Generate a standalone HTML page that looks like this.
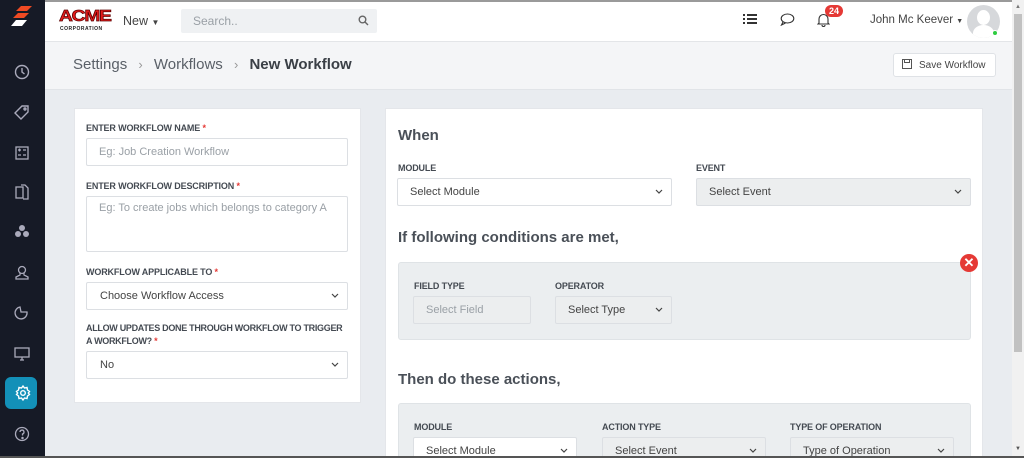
<!DOCTYPE html>
<html><head><meta charset="utf-8"><style>
*{box-sizing:border-box;margin:0;padding:0}
html,body{width:1024px;height:458px;overflow:hidden}
body{background:#e9ecf0;font-family:"Liberation Sans",sans-serif;position:relative;color:#3a3f46}
.sb{position:absolute;left:0;top:0;width:45px;height:458px;background:#161a26}
.ic{position:absolute;left:12px;width:20px;height:20px}
.hdr{position:absolute;left:45px;top:0;width:967px;height:42px;background:#fff;border-top:2px solid #9a9a9a;border-bottom:1px solid #e3e5e8}
.bc{position:absolute;left:45px;top:42px;width:967px;height:48px;background:#f4f5f7;border-bottom:1px solid #e1e4e8}
.card{position:absolute;background:#fff;border:1px solid #e4e6ea}
.lbl{position:absolute;font-size:9px;font-weight:bold;color:#444a52;letter-spacing:-.15px;white-space:nowrap}
.lbl b{color:#e53935}
.in{position:absolute;border:1px solid #dcdfe3;border-radius:2px;background:#fff;font-size:11px;color:#9aa0a6;padding-left:12px;display:flex;align-items:center}
.in.dk{color:#444}
.in.g{background:#eceeef}
.in svg{position:absolute;right:8px;top:50%;margin-top:-3px}
h3{position:absolute;font-size:15px;font-weight:bold;color:#4a5058}
.gb{position:absolute;background:#ebeef0;border:1px solid #dfe3e6;border-radius:3px}
.sc{position:absolute;left:1012px;top:0;width:12px;height:458px;background:#f1f1f1}
</style></head><body>
<div class="sb">
 <svg style="position:absolute;left:9px;top:6px" width="26" height="24" viewBox="0 0 26 24"><polygon points="12,0 23,0 18,5 7,5" fill="#f04a23"/><polygon points="9,7 20,7 15,12 4,12" fill="#f04a23"/><polygon points="7,14 18,14 13,20 2,20" fill="#fff"/></svg>
 <svg class="ic" style="top:62px" viewBox="0 0 20 20" fill="none" stroke="#aab" stroke-width="1.4"><circle cx="10" cy="10" r="6.5"/><path d="M10 6v4l2.5 2"/></svg>
 <svg class="ic" style="top:102px" viewBox="0 0 20 20" fill="none" stroke="#aab" stroke-width="1.4"><path d="M10 4h6v6l-7 7-6-6z"/><circle cx="13" cy="7" r="1"/></svg>
 <svg class="ic" style="top:143px" viewBox="0 0 20 20" fill="none" stroke="#aab" stroke-width="1.3"><rect x="4" y="4" width="12" height="12"/><path d="M6 7h3M11 7h3M6 12h3M11 12h3M7.5 5.5v3"/></svg>
 <svg class="ic" style="top:182px" viewBox="0 0 20 20" fill="none" stroke="#aab" stroke-width="1.3"><rect x="4" y="5" width="7" height="11"/><path d="M9 3h4l3 3v11h-5"/></svg>
 <svg class="ic" style="top:222px" viewBox="0 0 20 20" fill="#aab"><circle cx="10" cy="6" r="3"/><circle cx="6" cy="12" r="3"/><circle cx="14" cy="12" r="3"/></svg>
 <svg class="ic" style="top:262px" viewBox="0 0 20 20" fill="none" stroke="#aab" stroke-width="1.3"><circle cx="10" cy="8" r="3.5"/><path d="M8 11v2l-4 2v2h12v-2l-4-2v-2"/></svg>
 <svg class="ic" style="top:303px" viewBox="0 0 20 20" fill="none" stroke="#aab" stroke-width="1.3"><path d="M8 4a6 6 0 1 0 7 5h-6z"/></svg>
 <svg class="ic" style="top:343px" viewBox="0 0 20 20" fill="none" stroke="#aab" stroke-width="1.3"><rect x="3" y="5" width="14" height="9"/><path d="M8 17h4M10 14v3"/></svg>
 <div style="position:absolute;left:5px;top:377px;width:32px;height:32px;border-radius:6px;background:#1390b8"></div>
 <svg class="ic" style="top:383px;left:13px" viewBox="0 0 20 20" fill="none" stroke="#fff" stroke-width="1.4"><circle cx="10" cy="10" r="2.3"/><path d="M10 3l1.5 2 2.5-.5.5 2.5 2 1.5-1.2 1.5 1.2 1.5-2 1.5-.5 2.5-2.5-.5-1.5 2-1.5-2-2.5.5-.5-2.5-2-1.5 1.2-1.5-1.2-1.5 2-1.5.5-2.5 2.5.5z"/></svg>
 <svg class="ic" style="top:424px" viewBox="0 0 20 20" fill="none" stroke="#aab" stroke-width="1.3"><circle cx="10" cy="10" r="6.5"/><path d="M8 8a2 2 0 1 1 2.5 2v1.5"/><circle cx="10.5" cy="14" r=".6" fill="#aab"/></svg>
</div>
<div class="hdr">
 <div style="position:absolute;left:14px;top:6px;font:900 16px 'Liberation Sans';color:#e51b1b;letter-spacing:-1px;-webkit-text-stroke:.7px #5a0000;transform:scaleX(1.2);transform-origin:left">ACME</div>
 <div style="position:absolute;left:15px;top:24px;font:bold 5px 'Liberation Sans';color:#222;letter-spacing:.5px">CORPORATION</div>
 <div style="position:absolute;left:78px;top:12px;font-size:12.5px;color:#444">New <span style="font-size:8px">▼</span></div>
 <div style="position:absolute;left:136px;top:7px;width:196px;height:24px;background:#eff1f3;border-radius:2px;font-size:12px;color:#9aa0a6;padding:5px 12px">Search..</div>
 <svg style="position:absolute;left:313px;top:13px" width="11" height="11" viewBox="0 0 11 11" fill="none" stroke="#666" stroke-width="1.4"><circle cx="4.5" cy="4.5" r="3.3"/><path d="M7 7l3 3"/></svg>
 <svg style="position:absolute;left:698px;top:11px" width="14" height="12" viewBox="0 0 14 12" fill="#333"><rect x="0" y="1" width="2" height="2"/><rect x="0" y="5" width="2" height="2"/><rect x="0" y="9" width="2" height="2"/><rect x="4" y="1" width="10" height="2"/><rect x="4" y="5" width="10" height="2"/><rect x="4" y="9" width="10" height="2"/></svg>
 <svg style="position:absolute;left:735px;top:11px" width="15" height="13" viewBox="0 0 15 13" fill="none" stroke="#333" stroke-width="1.1"><ellipse cx="7.5" cy="5.5" rx="6.3" ry="4.5"/><path d="M3 9l-1.5 3 4-2"/></svg>
 <svg style="position:absolute;left:772px;top:10px" width="13" height="15" viewBox="0 0 13 15" fill="none" stroke="#333" stroke-width="1.1"><path d="M2 11V7a4.5 4.5 0 0 1 9 0v4l1 1H1z M5 13a1.5 1.5 0 0 0 3 0"/></svg>
 <div style="position:absolute;left:780px;top:3px;background:#e53935;color:#fff;font-size:9px;font-weight:bold;border-radius:8px;padding:1px 4px">24</div>
 <div style="position:absolute;left:825px;top:12px;font-size:11.5px;color:#444;white-space:nowrap">John Mc Keever <span style="font-size:7px">▼</span></div>
 <div style="position:absolute;left:922px;top:3px;width:33px;height:33px;border-radius:50%;background:#d6d8db;overflow:hidden"><div style="position:absolute;left:10px;top:5px;width:13px;height:15px;border-radius:50%;background:#fff"></div><div style="position:absolute;left:6px;top:20px;width:21px;height:16px;border-radius:50% 50% 0 0;background:#fff"></div></div>
 <div style="position:absolute;left:947px;top:28px;width:6px;height:6px;border-radius:50%;background:#2ecc40;border:1px solid #fff"></div>
</div>
<div class="bc">
 <div style="position:absolute;left:28px;top:14px;font-size:15px;color:#5a6068;white-space:nowrap">Settings <span style="font-size:13px;color:#999;margin:0 7px">›</span> Workflows <span style="font-size:13px;color:#999;margin:0 7px">›</span> <b style="color:#3a3f46">New Workflow</b></div>
 <div style="position:absolute;left:848px;top:11px;width:103px;height:24px;background:#fff;border:1px solid #dfe2e6;border-radius:3px;font-size:10px;color:#444;padding:6px 0 0 25px">Save Workflow</div>
 <svg style="position:absolute;left:857px;top:17px" width="10" height="10" viewBox="0 0 10 10" fill="none" stroke="#555" stroke-width="1"><rect x=".5" y=".5" width="9" height="9"/><rect x="2.5" y=".5" width="5" height="3"/></svg>
</div>
<div class="card" style="left:74px;top:108px;width:287px;height:295px"></div>
<div class="lbl" style="left:86px;top:123px">ENTER WORKFLOW NAME <b>*</b></div>
<div class="in" style="left:86px;top:138px;width:262px;height:28px">Eg: Job Creation Workflow</div>
<div class="lbl" style="left:86px;top:181px">ENTER WORKFLOW DESCRIPTION <b>*</b></div>
<div class="in" style="left:86px;top:196px;width:262px;height:56px;align-items:flex-start;padding-top:5px">Eg: To create jobs which belongs to category A</div>
<div class="lbl" style="left:86px;top:267px">WORKFLOW APPLICABLE TO <b>*</b></div>
<div class="in dk" style="left:86px;top:282px;width:262px;height:28px;padding-left:13px">Choose Workflow Access<svg width="8" height="5" viewBox="0 0 8 5" fill="none" stroke="#444" stroke-width="1.2"><path d="M1 1l3 3 3-3"/></svg></div>
<div class="lbl" style="left:86px;top:322px;line-height:13px;letter-spacing:-.3px">ALLOW UPDATES DONE THROUGH WORKFLOW TO TRIGGER<br>A WORKFLOW? <b>*</b></div>
<div class="in dk" style="left:86px;top:351px;width:262px;height:28px;padding-left:13px">No<svg width="8" height="5" viewBox="0 0 8 5" fill="none" stroke="#444" stroke-width="1.2"><path d="M1 1l3 3 3-3"/></svg></div>

<div class="card" style="left:385px;top:108px;width:598px;height:350px;border-bottom:none"></div>
<h3 style="left:398px;top:127px">When</h3>
<div class="lbl" style="left:398px;top:163px">MODULE</div>
<div class="in dk" style="left:397px;top:178px;width:275px;height:28px">Select Module<svg width="8" height="5" viewBox="0 0 8 5" fill="none" stroke="#444" stroke-width="1.2"><path d="M1 1l3 3 3-3"/></svg></div>
<div class="lbl" style="left:696px;top:163px">EVENT</div>
<div class="in dk g" style="left:696px;top:178px;width:275px;height:28px">Select Event<svg width="8" height="5" viewBox="0 0 8 5" fill="none" stroke="#444" stroke-width="1.2"><path d="M1 1l3 3 3-3"/></svg></div>
<h3 style="left:398px;top:229px">If following conditions are met,</h3>
<div class="gb" style="left:398px;top:262px;width:573px;height:78px"></div>
<div style="position:absolute;left:960px;top:254px;width:18px;height:18px;border-radius:50%;background:#e53935;color:#fff;font:bold 13px 'Liberation Sans';text-align:center;line-height:18px">✕</div>
<div class="lbl" style="left:414px;top:281px">FIELD TYPE</div>
<div class="in g" style="left:413px;top:296px;width:118px;height:28px">Select Field</div>
<div class="lbl" style="left:555px;top:281px">OPERATOR</div>
<div class="in dk g" style="left:555px;top:296px;width:117px;height:28px">Select Type<svg width="8" height="5" viewBox="0 0 8 5" fill="none" stroke="#444" stroke-width="1.2"><path d="M1 1l3 3 3-3"/></svg></div>
<h3 style="left:398px;top:371px">Then do these actions,</h3>
<div class="gb" style="left:398px;top:403px;width:573px;height:60px"></div>
<div class="lbl" style="left:414px;top:422px">MODULE</div>
<div class="in dk" style="left:413px;top:437px;width:164px;height:28px">Select Module<svg width="8" height="5" viewBox="0 0 8 5" fill="none" stroke="#444" stroke-width="1.2"><path d="M1 1l3 3 3-3"/></svg></div>
<div class="lbl" style="left:602px;top:422px">ACTION TYPE</div>
<div class="in dk g" style="left:602px;top:437px;width:164px;height:28px">Select Event<svg width="8" height="5" viewBox="0 0 8 5" fill="none" stroke="#444" stroke-width="1.2"><path d="M1 1l3 3 3-3"/></svg></div>
<div class="lbl" style="left:790px;top:422px">TYPE OF OPERATION</div>
<div class="in dk g" style="left:790px;top:437px;width:164px;height:28px">Type of Operation<svg width="8" height="5" viewBox="0 0 8 5" fill="none" stroke="#444" stroke-width="1.2"><path d="M1 1l3 3 3-3"/></svg></div>
<div class="sc"><div style="position:absolute;left:2px;top:14px;width:8px;height:338px;background:#c1c1c1"></div>
<div style="position:absolute;left:3px;top:4px;font-size:6px;color:#777">▲</div><div style="position:absolute;left:3px;top:446px;font-size:6px;color:#555">▼</div></div>
<div style="position:absolute;left:0;top:456px;width:1024px;height:2px;background:#555"></div>
</body></html>
